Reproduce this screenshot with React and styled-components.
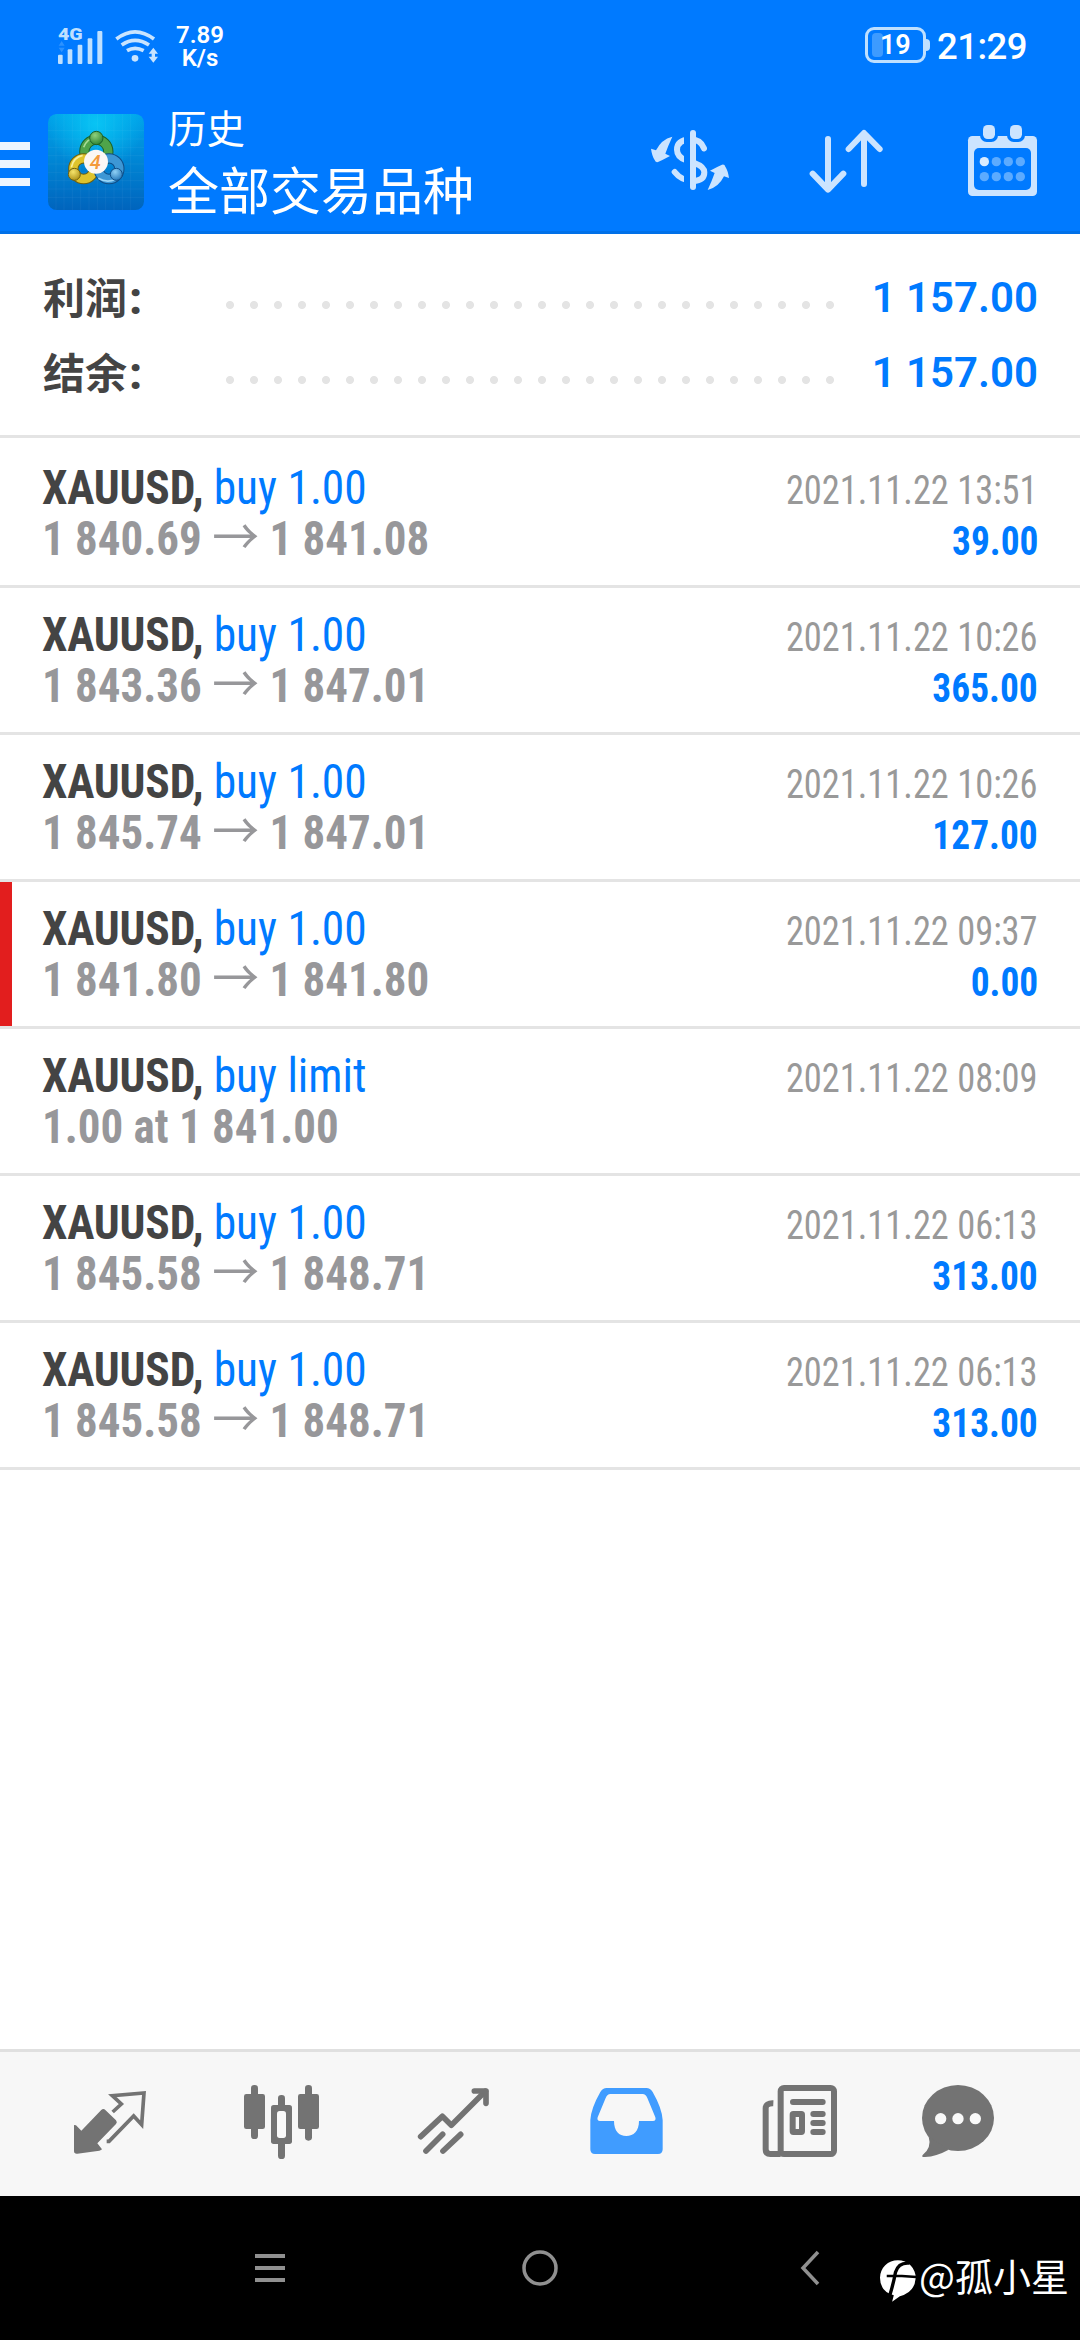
import styled, { createGlobalStyle } from "styled-components";

const BLUE = "#007aff";
const PALE = "#cce4ff";
const GRAY = "#737373";

const GlobalStyle = createGlobalStyle`
  * {
    box-sizing: border-box;
  }
  body {
    margin: 0;
    background: #fff;
    font-family: Roboto, "Noto Sans CJK SC", sans-serif;
  }
  svg {
    display: block;
    flex: none;
    overflow: visible;
  }
`;

const Screen = styled.div`
  width: 1080px;
  height: 2340px;
  display: flex;
  flex-direction: column;
  position: relative;
  overflow: hidden;
  background: #fff;
`;

const StatusBar = styled.div`
  height: 90px;
  padding: 0 53px 0 58px;
  display: flex;
  align-items: center;
  background: ${BLUE};
  color: #fff;
`;
const WifiSvg = styled.svg`
  width: 44px;
  height: 40px;
  margin-left: 12px;
`;
const Speed = styled.div`
  width: 60px;
  margin-left: 11px;
  padding-top: 3px;
  font-size: 24px;
  line-height: 22.5px;
  font-weight: 600;
  text-align: center;
`;
const Battery = styled.div`
  width: 61px;
  height: 36px;
  margin-left: auto;
  margin-right: 11px;
  padding: 4px;
  display: flex;
  align-items: center;
  border: 3px solid #bfe0ff;
  border-radius: 9px;
  font-size: 27px;
  font-weight: 600;
  position: relative;

  &::after {
    content: "";
    position: absolute;
    right: -7px;
    top: 9px;
    width: 4px;
    height: 12px;
    border-radius: 0 5px 5px 0;
    background: #bfe0ff;
  }
`;
const BatteryLevel = styled.div`
  width: 11px;
  height: 24px;
  margin-right: -3px;
  border-radius: 4px;
  background: #3d9bff;
`;
const Clock = styled.div`
  padding-top: 2px;
  font-size: 36.5px;
  font-weight: 500;
  letter-spacing: -0.5px;
`;

const Header = styled.div`
  height: 144px;
  padding-right: 43px;
  display: flex;
  align-items: center;
  background: ${BLUE};
  border-bottom: 3px solid #0070e8;
  color: #fff;
`;
const MenuButton = styled.div`
  width: 30px;
  height: 44px;
  margin-top: 7px;
  display: flex;
  flex-direction: column;
  justify-content: space-between;

  & span {
    height: 8px;
    background: #ecf5ff;
  }
`;
const AppIcon = styled.svg`
  width: 96px;
  height: 96px;
  margin: 3px 24px 0 18px;
`;
const Titles = styled.div`
  padding-top: 7px;
  display: flex;
  flex-direction: column;
  gap: 3px;
`;
const Title = styled.div`
  font-size: 38.5px;
  line-height: 54px;
`;
const Subtitle = styled.div`
  font-size: 51px;
  line-height: 66px;
`;
const Actions = styled.div`
  margin-left: auto;
  display: flex;
  gap: 81px;
`;

const Summary = styled.div`
  height: 204px;
  padding: 26px 42px 0 43px;
  border-bottom: 3px solid #e4e4e4;
`;
const SummaryRow = styled.div`
  height: 75px;
  display: flex;
  align-items: center;
  font-size: 42px;
  font-weight: 700;
  line-height: 75px;
  color: #444;
`;
const SummaryLabel = styled.div`
  width: 175px;
  padding-top: 2px;
  display: flex;
  align-items: baseline;
  gap: 2px;

  & span {
    font-size: 46px;
    font-weight: 800;
  }
`;
const Dots = styled.div`
  width: 624px;
  height: 24px;
  margin-top: 15px;
  background: radial-gradient(circle, #e4e4e4 3.6px, transparent 4.4px) 0 0 / 24px 24px;
`;
const SummaryValue = styled.div`
  flex: 1;
  text-align: right;
  font-weight: 600;
  white-space: nowrap;
  color: ${BLUE};
`;

const List = styled.div`
  flex: 1;
  padding-top: 3px;
`;
const Row = styled.div`
  height: 147px;
  padding: 21px 42px 0;
  border-bottom: 3px solid #e4e4e4;
  font-family: "Roboto Condensed", Roboto, "Noto Sans CJK SC", sans-serif;
  box-shadow: ${(p) => (p.$marked ? "inset 12px 0 #e21e1e" : "none")};
`;
const Line = styled.div`
  height: 51px;
  display: flex;
  justify-content: space-between;
  align-items: baseline;
  line-height: 51px;
  white-space: nowrap;
`;
const Deal = styled.div`
  font-size: 48px;
  font-weight: 700;
  letter-spacing: -0.2px;
  color: #444;
  transform: scaleX(0.947);
  transform-origin: left;

  & span {
    font-weight: 400;
    letter-spacing: 0;
    color: ${BLUE};
  }
`;
const Price = styled.div`
  font-size: 48px;
  font-weight: 700;
  color: #97979a;
  transform: scaleX(0.937);
  transform-origin: left;

  & i {
    font-style: normal;
    font-weight: 400;
    font-size: 50px;
  }
`;
const Time = styled.div`
  font-size: 40px;
  color: #999;
  transform: scaleX(0.91);
  transform-origin: right;
`;
const Profit = styled.div`
  font-size: 40px;
  font-weight: 700;
  color: ${BLUE};
  transform: scaleX(0.935);
  transform-origin: right;
`;

const TabBar = styled.div`
  height: 147px;
  padding-left: 24px;
  display: flex;
  align-items: center;
  background: #f7f7f7;
  border-top: 3px solid #e0e0e0;
`;
const Tab = styled.div`
  width: 172px;
  display: flex;
  justify-content: center;
  color: ${(p) => (p.$active ? "#409cff" : GRAY)};

  &:last-child {
    width: 148px;
  }
`;

const NavBar = styled.div`
  height: 144px;
  padding: 0 135px;
  display: flex;
  align-items: center;
  background: #000;
`;
const NavKey = styled.div`
  flex: 1;
  display: flex;
  justify-content: center;
`;
const Watermark = styled.div`
  position: absolute;
  right: 11px;
  bottom: 37px;
  display: flex;
  align-items: center;
  gap: 3px;
  font: 38px/56px "Noto Sans CJK SC", sans-serif;
  color: #fff;

  & svg {
    margin-top: 11px;
  }
`;

const deals = [
  { action: "buy 1.00", from: "1 840.69", to: "1 841.08", time: "2021.11.22 13:51", profit: "39.00" },
  { action: "buy 1.00", from: "1 843.36", to: "1 847.01", time: "2021.11.22 10:26", profit: "365.00" },
  { action: "buy 1.00", from: "1 845.74", to: "1 847.01", time: "2021.11.22 10:26", profit: "127.00" },
  { action: "buy 1.00", from: "1 841.80", to: "1 841.80", time: "2021.11.22 09:37", profit: "0.00", marked: true },
  { action: "buy limit", note: "1.00 at 1 841.00", time: "2021.11.22 08:09" },
  { action: "buy 1.00", from: "1 845.58", to: "1 848.71", time: "2021.11.22 06:13", profit: "313.00" },
  { action: "buy 1.00", from: "1 845.58", to: "1 848.71", time: "2021.11.22 06:13", profit: "313.00" },
];

const Signal = () => (
  <svg width="45" height="40" viewBox="25 30 135 120" fill="#bfe0ff">
    <text x="25" y="74" fontSize="50" fontWeight="900" textLength="74" lengthAdjust="spacingAndGlyphs">4G</text>
    <path d="M36 78l9 14H27zM36 112l9-14H27z" fill="#2d92ff" />
    <rect x="25" y="119" width="14" height="28" rx="3" />
    <rect x="54" y="103" width="14" height="44" rx="3" />
    <rect x="84" y="89" width="14" height="58" rx="3" />
    <rect x="114" y="70" width="14" height="77" rx="3" />
    <rect x="143" y="48" width="15" height="99" rx="3" />
  </svg>
);

const Wifi = () => (
  <WifiSvg viewBox="195 30 132 120" fill="none" stroke="#c8e4ff" strokeWidth="11">
    <path d="M199 72Q255 29 312 72" />
    <path d="M215 90Q255 62 297 90" />
    <path d="M231 107Q255 93 281 107" />
    <circle cx="255" cy="130" r="10" fill="#c8e4ff" stroke="none" />
    <path d="M310 98l14 18h-9v9h9l-14 18-14-18h9v-9h-9z" fill="#c8e4ff" stroke="none" />
  </WifiSvg>
);

const Logo = () => (
  <AppIcon viewBox="54 42 288 288">
    <defs>
      <linearGradient id="tile" x1="0" y1="0" x2="0" y2="1">
        <stop offset="0" stopColor="#00a4ea" />
        <stop offset="0.45" stopColor="#0088d6" />
        <stop offset="1" stopColor="#0064bd" />
      </linearGradient>
      <radialGradient id="shine" cx="0.5" cy="0.1" r="0.5">
        <stop offset="0" stopColor="#08c4f4" />
        <stop offset="1" stopColor="#08c4f4" stopOpacity="0" />
      </radialGradient>
      <radialGradient id="green" cx="0.4" cy="0.3" r="0.8">
        <stop offset="0" stopColor="#8fd07c" />
        <stop offset="1" stopColor="#237c2c" />
      </radialGradient>
      <radialGradient id="yellow" cx="0.4" cy="0.3" r="0.8">
        <stop offset="0" stopColor="#f5e36a" />
        <stop offset="1" stopColor="#a88a10" />
      </radialGradient>
      <radialGradient id="blue" cx="0.4" cy="0.3" r="0.8">
        <stop offset="0" stopColor="#8fd0f5" />
        <stop offset="1" stopColor="#1c70b5" />
      </radialGradient>
    </defs>
    <rect x="54" y="42" width="288" height="288" rx="26" fill="url(#tile)" />
    <rect x="54" y="42" width="288" height="288" rx="26" fill="url(#shine)" />
    <path
      d="M78 42V330M102 42V330M127 42V330M152 42V330M177 42V330M202 42V330M227 42V330M252 42V330M277 42V330M302 42V330M54 92H342M54 117H342M54 142H342M54 167H342M54 192H342M54 217H342M54 242H342M54 267H342M54 292H342"
      stroke="#fff"
      strokeOpacity="0.07"
      strokeWidth="2"
    />
    <g fill="none">
      <circle cx="199" cy="155" r="36" stroke="#1d6128" strokeWidth="31" />
      <circle cx="199" cy="155" r="36" stroke="#4fa44a" strokeWidth="25" />
      <path d="M161 142Q170 116 196 114" stroke="#a8dc96" strokeWidth="5" />
      <circle cx="161" cy="206" r="31" stroke="#6e6010" strokeWidth="31" />
      <circle cx="161" cy="206" r="31" stroke="#dfc32c" strokeWidth="25" />
      <path d="M124 202Q130 172 158 166" stroke="#f8ee98" strokeWidth="5" />
      <circle cx="237" cy="206" r="31" stroke="#0f4d86" strokeWidth="31" />
      <circle cx="237" cy="206" r="31" stroke="#3d97d5" strokeWidth="25" />
      <path d="M205 235Q230 250 257 238" stroke="#9bd6f7" strokeWidth="5" />
    </g>
    <circle cx="199" cy="114" r="20" fill="url(#green)" stroke="#1d6128" strokeWidth="3" />
    <circle cx="133" cy="223" r="18" fill="url(#yellow)" stroke="#6e6010" strokeWidth="3" />
    <circle cx="259" cy="223" r="18" fill="url(#blue)" stroke="#0f4d86" strokeWidth="3" />
    <circle cx="198" cy="185" r="36" fill="#fbf7f5" />
    <text x="196" y="207" fontSize="60" fontWeight="500" fontStyle="italic" textAnchor="middle" fill="#f39a3c">4</text>
  </AppIcon>
);

const CurrencyIcon = () => (
  <svg width="78" height="81" viewBox="33 30 234 243" fill={PALE}>
    <path
      d="M192 115Q182 88 150 88Q111 91 111 119Q111 142 140 151L165 160Q193 170 193 187Q193 212 160 213Q125 213 104 186"
      fill="none"
      stroke={PALE}
      strokeWidth="18"
      strokeLinecap="round"
    />
    <path d="M132 70H150V230H132z" fill={BLUE} />
    <rect x="150" y="60" width="18" height="180" rx="9" />
    <path d="M97 80Q84 108 76 131L90 138Q68 150 54 156Q46 158 44 150Q36 138 33 116L48 121Q64 88 97 80Z" />
    <path d="M97 80Q84 108 76 131L90 138Q68 150 54 156Q46 158 44 150Q36 138 33 116L48 121Q64 88 97 80Z" transform="rotate(180 150 160)" />
  </svg>
);

const SortIcon = () => (
  <svg width="77" height="81" viewBox="510 30 231 243" fill="none" stroke={PALE} strokeWidth="18" strokeLinecap="round" strokeLinejoin="round">
    <path d="M564 87V235M518 191L564 239L610 191M672 222V72M626 117L672 69L719 117" />
  </svg>
);

const CalendarIcon = () => (
  <svg width="69" height="81" viewBox="984 30 207 243" fill={PALE}>
    <rect x="984" y="78" width="207" height="180" rx="13" />
    <rect x="1002" y="114" width="171" height="126" rx="15" fill={BLUE} />
    {[1047, 1128].map((x) => (
      <g key={x}>
        <rect x={x - 27} y="36" width="54" height="60" rx="20" fill={BLUE} />
        <rect x={x - 18} y="45" width="36" height="42" rx="14" />
      </g>
    ))}
    {[155, 200].map((y) =>
      [1033, 1069, 1105, 1141].map((x) => (
        <circle key={x + y} cx={x} cy={y} r="14" fill={x === 1033 && y === 155 ? "#d9ecff" : "#5cabff"} />
      ))
    )}
  </svg>
);

const QuotesIcon = () => (
  <svg width="80" height="80" viewBox="30 42 240 240" fill="currentColor">
    <path d="M42 165L48 166L64 182L123 121Q130 114 136 120L168 151Q173 157 168 162L112 220L126 238Q124 241 118 242L52 251Q42 252 42 243Z" />
    <path d="M158 126L184 102L157 77L252 69L245 164L221 138L147 214H140" fill="none" stroke="currentColor" strokeWidth="11" />
  </svg>
);

const ChartIcon = () => (
  <svg width="80" height="80" viewBox="546 42 240 240" fill="currentColor">
    <rect x="573" y="45" width="21" height="162" rx="10" />
    <rect x="552" y="72" width="63" height="105" rx="7" />
    <rect x="735" y="45" width="21" height="167" rx="10" />
    <rect x="714" y="72" width="63" height="105" rx="7" />
    <rect x="654" y="75" width="21" height="192" rx="10" />
    <rect x="633" y="105" width="63" height="117" rx="8" />
    <rect x="651" y="123" width="27" height="81" rx="8" fill="#f9f9f9" />
  </svg>
);

const TradeIcon = () => (
  <svg width="80" height="80" viewBox="1062 42 240 240" fill="none" stroke="currentColor" strokeWidth="17" strokeLinecap="round" strokeLinejoin="round">
    <path d="M1082 200L1147 139L1174 166L1276 64" />
    <path d="M1243 63H1278V100" />
    <path d="M1098 243L1148 193M1149 243L1202 193" />
  </svg>
);

const HistoryIcon = () => (
  <svg width="80" height="80" viewBox="138 132 240 240" fill="currentColor">
    <path
      fillRule="evenodd"
      d="M200 144H319Q331 144 338 156Q366 205 368 240V328Q368 342 354 342H165Q151 342 151 328V240Q153 205 181 156Q188 144 200 144ZM211 162H308Q317 162 322 174L346 232Q349 243 339 243H297C297 273 281 288 259 288S222 273 222 243H180Q170 243 173 232L197 174Q202 162 211 162Z"
    />
  </svg>
);

const NewsIcon = () => (
  <svg width="80" height="80" viewBox="654 132 240 240" fill="none" stroke="currentColor" strokeWidth="18">
    <rect x="722" y="144" width="160" height="198" rx="10" />
    <path d="M700 190Q677 189 677 205V328Q677 342 691 342H722" />
    <path d="M759 186H848M820 222H848M820 249H848M820 276H848" strokeLinecap="round" />
    <rect x="758" y="222" width="28" height="54" rx="2" />
  </svg>
);

const ChatIcon = () => (
  <svg width="80" height="80" viewBox="1134 132 240 240" fill="currentColor">
    <ellipse cx="1254" cy="234" rx="108" ry="99" />
    <path d="M1166 290Q1176 322 1148 345Q1143 352 1155 351Q1190 349 1226 329Z" />
    <g fill="#f9f9f9">
      <circle cx="1202" cy="236" r="17" />
      <circle cx="1254" cy="236" r="17" />
      <circle cx="1306" cy="236" r="17" />
    </g>
  </svg>
);

const WatermarkLogo = () => (
  <svg width="36" height="42" viewBox="65 64 107 124">
    <path d="M118 64A53 52 0 0 1 171 118Q168 160 124 171L101 188L106 168Q65 158 65 116A53 52 0 0 1 118 64Z" fill="#fff" />
    <path d="M152 73Q120 70 111 100Q106 130 93 172" fill="none" stroke="#000" strokeWidth="10" />
    <path d="M85 111H130L173 114" fill="none" stroke="#000" strokeWidth="7" />
  </svg>
);

function App() {
  return (
    <Screen>
      <GlobalStyle />
      <StatusBar>
        <Signal />
        <Wifi />
        <Speed>
          7.89
          <br />
          K/s
        </Speed>
        <Battery>
          <BatteryLevel />
          19
        </Battery>
        <Clock>21:29</Clock>
      </StatusBar>
      <Header>
        <MenuButton>
          <span />
          <span />
          <span />
        </MenuButton>
        <Logo />
        <Titles>
          <Title>历史</Title>
          <Subtitle>全部交易品种</Subtitle>
        </Titles>
        <Actions>
          <CurrencyIcon />
          <SortIcon />
          <CalendarIcon />
        </Actions>
      </Header>
      <Summary>
        {["利润", "结余"].map((label) => (
          <SummaryRow key={label}>
            <SummaryLabel>
              {label}
              <span>:</span>
            </SummaryLabel>
            <Dots />
            <SummaryValue>1 157.00</SummaryValue>
          </SummaryRow>
        ))}
      </Summary>
      <List>
        {deals.map((deal, i) => (
          <Row key={i} $marked={deal.marked}>
            <Line>
              <Deal>
                XAUUSD, <span>{deal.action}</span>
              </Deal>
              <Time>{deal.time}</Time>
            </Line>
            <Line>
              <Price>
                {deal.note || (
                  <>
                    {deal.from} <i>→</i> {deal.to}
                  </>
                )}
              </Price>
              <Profit>{deal.profit}</Profit>
            </Line>
          </Row>
        ))}
      </List>
      <TabBar>
        <Tab><QuotesIcon /></Tab>
        <Tab><ChartIcon /></Tab>
        <Tab><TradeIcon /></Tab>
        <Tab $active><HistoryIcon /></Tab>
        <Tab><NewsIcon /></Tab>
        <Tab><ChatIcon /></Tab>
      </TabBar>
      <NavBar>
        <NavKey>
          <svg width="30" height="30" fill="none" stroke="#909090" strokeWidth="4">
            <path d="M0 3H30M0 15H30M0 27H30" />
          </svg>
        </NavKey>
        <NavKey>
          <svg width="36" height="36" fill="none" stroke="#909090" strokeWidth="3.5">
            <circle cx="18" cy="18" r="16" />
          </svg>
        </NavKey>
        <NavKey>
          <svg width="18" height="34" fill="none" stroke="#909090" strokeWidth="3.5">
            <path d="M17 1L2 17L17 33" />
          </svg>
        </NavKey>
      </NavBar>
      <Watermark>
        <WatermarkLogo />
        @孤小星
      </Watermark>
    </Screen>
  );
}

export default App;
